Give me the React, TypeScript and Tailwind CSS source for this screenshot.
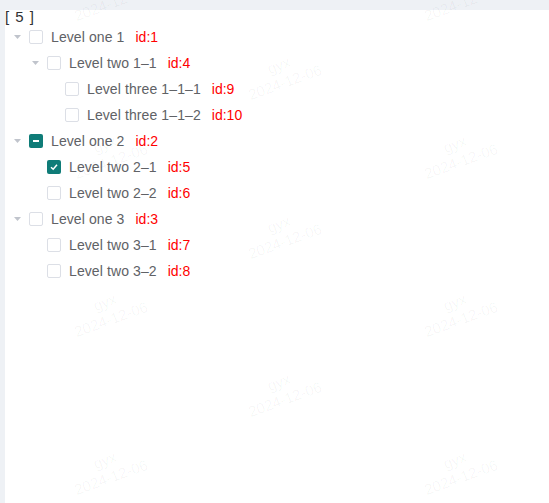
import { Fragment } from 'react'

type Node = {
  id: number
  label: string
  state?: 'checked' | 'half'
  children?: Node[]
}

const tree: Node[] = [
  {
    id: 1,
    label: 'Level one 1',
    children: [
      {
        id: 4,
        label: 'Level two 1-1',
        children: [
          { id: 9, label: 'Level three 1-1-1' },
          { id: 10, label: 'Level three 1-1-2' },
        ],
      },
    ],
  },
  {
    id: 2,
    label: 'Level one 2',
    state: 'half',
    children: [
      { id: 5, label: 'Level two 2-1', state: 'checked' },
      { id: 6, label: 'Level two 2-2' },
    ],
  },
  {
    id: 3,
    label: 'Level one 3',
    children: [
      { id: 7, label: 'Level two 3-1' },
      { id: 8, label: 'Level two 3-2' },
    ],
  },
]

// 水印中心点（日期那一行的中心）
const marks = [
  [111, 4], [461, 4], [285, 83],
  [111, 162], [461, 162], [285, 242],
  [111, 320], [461, 320], [285, 400],
  [111, 478], [461, 478],
]

const Caret = ({ hidden }: { hidden?: boolean }) => (
  <span className="w-6 h-6 flex items-center justify-center shrink-0">
    {!hidden && (
      <svg width="7" height="4" viewBox="0 0 7 4">
        <path d="M0 0 L7 0 L3.5 4 Z" fill="#c0c4cc" />
      </svg>
    )}
  </span>
)

const Box = ({ state }: { state?: Node['state'] }) => {
  if (state === 'checked')
    return (
      <span className="w-[14px] h-[14px] rounded-[2px] bg-[#0f7c78] flex items-center justify-center shrink-0">
        <svg width="10" height="10" viewBox="0 0 10 10">
          <path d="M2 5.2 L4.2 7.2 L8 2.8" stroke="#fff" strokeWidth="1.5" fill="none" />
        </svg>
      </span>
    )
  if (state === 'half')
    return (
      <span className="w-[14px] h-[14px] rounded-[2px] bg-[#0f7c78] flex items-center justify-center shrink-0">
        <span className="w-[6px] h-[2px] bg-white" />
      </span>
    )
  return <span className="w-[14px] h-[14px] rounded-[2px] border border-[#dcdfe6] bg-white shrink-0" />
}

const Rows = ({ nodes, level }: { nodes: Node[]; level: number }) => (
  <>
    {nodes.map((n) => (
      <Fragment key={n.id}>
        <div className="h-[26px] flex items-center" style={{ paddingLeft: level * 18 }}>
          <Caret hidden={!n.children} />
          <Box state={n.state} />
          <span className="ml-2 text-[14px] tracking-[0.1px] text-[#606266]">{n.label.replace(/-/g, '–')}</span>
          <span className="ml-[11px] text-[14px] text-[#ff0000]">id:{n.id}</span>
        </div>
        {n.children && <Rows nodes={n.children} level={level + 1} />}
      </Fragment>
    ))}
  </>
)

export default function App() {
  return (
    <div
      className="relative w-[549px] h-[503px] overflow-hidden bg-[#eef1f5] pt-[10px] pl-[5px]"
      style={{ fontFamily: '"Liberation Sans", "Noto Sans CJK SC", sans-serif' }}
    >
      <div className="bg-white h-[493px]">
        <div className="h-[14px] leading-[14px] text-[15px] tracking-[1px] text-[#303133] whitespace-pre">[ 5 ]</div>
        <Rows nodes={tree} level={0} />
      </div>

      <div className="absolute inset-0 pointer-events-none">
        {marks.map(([x, y], i) => (
          <div
            key={i}
            className="absolute -translate-x-1/2 -translate-y-1/2 -rotate-20 flex flex-col items-center text-[15px] leading-[18px] text-black/[0.04] whitespace-nowrap"
            style={{ left: x - 3, top: y - 9 }}
          >
            <span>gyx</span>
            <span>2024-12-06</span>
          </div>
        ))}
      </div>
    </div>
  )
}
